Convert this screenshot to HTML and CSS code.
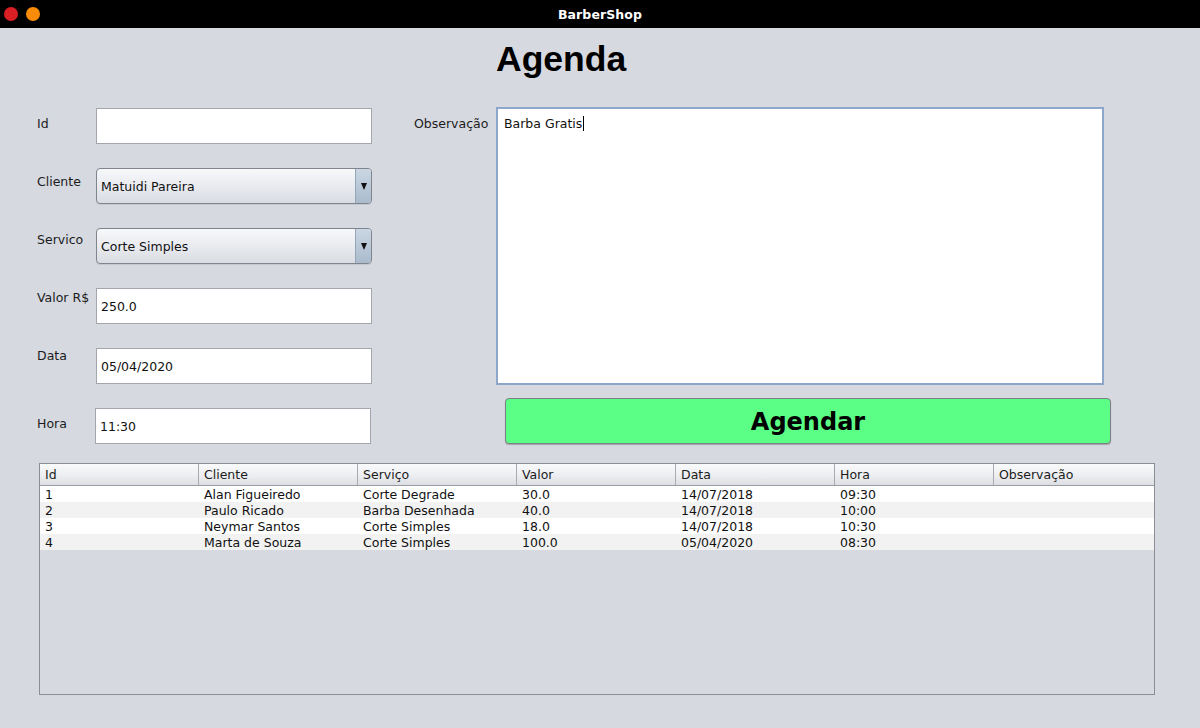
FILE: index.html
```html
<!DOCTYPE html>
<html lang="pt">
<head>
<meta charset="utf-8">
<title>BarberShop</title>
<link rel="stylesheet" href="styles.css">
</head>
<body>
<div class="window">
  <div class="titlebar">
    <div class="lights">
      <span class="light red"></span>
      <span class="light orange"></span>
    </div>
    <div class="wtitle">BarberShop</div>
  </div>
  <div class="content">
    <h1 class="heading">Agenda</h1>
    <div class="top">
      <div class="form">
        <div class="row">
          <label class="lbl off8">Id</label>
          <div class="field"></div>
        </div>
        <div class="row">
          <label class="lbl off5">Cliente</label>
          <div class="combo"><span class="combo-text">Matuidi Pareira</span><span class="combo-btn"><span class="tri"></span></span></div>
        </div>
        <div class="row">
          <label class="lbl off4">Servico</label>
          <div class="combo"><span class="combo-text">Corte Simples</span><span class="combo-btn"><span class="tri"></span></span></div>
        </div>
        <div class="row">
          <label class="lbl off2">Valor R$</label>
          <div class="field">250.0</div>
        </div>
        <div class="row">
          <label class="lbl off0">Data</label>
          <div class="field">05/04/2020</div>
        </div>
        <div class="row">
          <label class="lbl off8">Hora</label>
          <div class="field shift">11:30</div>
        </div>
      </div>
      <div class="right">
        <div class="obs-row">
          <label class="lbl obs-lbl">Observação</label>
          <div class="textarea">Barba Gratis<span class="caret"></span></div>
        </div>
        <div class="btn">Agendar</div>
      </div>
    </div>
    <div class="table">
      <div class="thead">
        <div class="th">Id</div>
        <div class="th">Cliente</div>
        <div class="th">Serviço</div>
        <div class="th">Valor</div>
        <div class="th">Data</div>
        <div class="th">Hora</div>
        <div class="th last">Observação</div>
      </div>
      <div class="tr">
        <div class="td">1</div><div class="td">Alan Figueiredo</div><div class="td">Corte Degrade</div><div class="td">30.0</div><div class="td">14/07/2018</div><div class="td">09:30</div><div class="td"></div>
      </div>
      <div class="tr alt">
        <div class="td">2</div><div class="td">Paulo Ricado</div><div class="td">Barba Desenhada</div><div class="td">40.0</div><div class="td">14/07/2018</div><div class="td">10:00</div><div class="td"></div>
      </div>
      <div class="tr">
        <div class="td">3</div><div class="td">Neymar Santos</div><div class="td">Corte Simples</div><div class="td">18.0</div><div class="td">14/07/2018</div><div class="td">10:30</div><div class="td"></div>
      </div>
      <div class="tr alt">
        <div class="td">4</div><div class="td">Marta de Souza</div><div class="td">Corte Simples</div><div class="td">100.0</div><div class="td">05/04/2020</div><div class="td">08:30</div><div class="td"></div>
      </div>
    </div>
  </div>
</div>
</body>
</html>
```

FILE: styles.css
```css
* { box-sizing: border-box; }

html, body {
  margin: 0;
  padding: 0;
}

body {
  width: 1200px;
  height: 728px;
  overflow: hidden;
  background: #d6d9e0;
  font-family: "DejaVu Sans", "Liberation Sans", sans-serif;
  font-size: 12.5px;
  color: #1c1c1c;
}

.window {
  width: 1200px;
  height: 728px;
  display: flex;
  flex-direction: column;
}

.titlebar {
  height: 28px;
  background: #000;
  display: flex;
  align-items: center;
  justify-content: center;
  position: relative;
}

.lights {
  position: absolute;
  left: 4px;
  top: 7px;
  display: flex;
  gap: 8px;
}

.light {
  width: 14px;
  height: 14px;
  border-radius: 50%;
  display: block;
}

.red { background: #d91e24; }
.orange { background: #fa8b08; }

.wtitle {
  color: #fff;
  font-weight: bold;
  font-size: 12.5px;
  letter-spacing: 0.1px;
}

.content {
  flex: 1;
  display: flex;
  flex-direction: column;
}

.heading {
  margin: 11px 0 0 496px;
  font-family: "Liberation Sans", Arial, sans-serif;
  font-weight: bold;
  font-size: 35.5px;
  line-height: 40px;
  height: 40px;
  color: #000;
}

.top {
  margin-top: 28px;
  display: flex;
  padding-left: 37px;
  gap: 42px;
}

.form {
  width: 335px;
  margin-top: 1px;
  display: flex;
  flex-direction: column;
  gap: 24px;
}

.row {
  display: flex;
  align-items: flex-start;
  height: 36px;
}

.lbl {
  width: 59px;
  line-height: 16px;
  white-space: nowrap;
  color: #1c1c1c;
}

.off8 { margin-top: 8px; }
.off5 { margin-top: 6px; }
.off4 { margin-top: 4px; }
.off2 { margin-top: 2px; }
.off0 { margin-top: 0; }

.field {
  width: 276px;
  height: 36px;
  background: #fff;
  border: 1px solid #a3a6ad;
  padding: 1px 0 0 4px;
  line-height: 34px;
  color: #111;
}

.field.shift { margin-left: -1px; }

.combo {
  width: 276px;
  height: 36px;
  border: 1px solid #80848d;
  border-radius: 4px;
  background: linear-gradient(#f7f8fa 0%, #e9ebef 50%, #d9dce2 100%);
  display: flex;
  overflow: hidden;
  box-shadow: 0 1px 0 rgba(0,0,0,0.08);
}

.combo-text {
  flex: 1;
  padding: 1px 0 0 4px;
  line-height: 34px;
  color: #111;
}

.combo-btn {
  width: 16px;
  border-left: 1px solid #95a6b8;
  background: linear-gradient(#cbd7e3, #a9bbcd);
  display: flex;
  align-items: center;
  justify-content: center;
}

.tri {
  width: 0;
  height: 0;
  border-left: 3.5px solid transparent;
  border-right: 3.5px solid transparent;
  border-top: 7px solid #111;
}

.right {
  display: flex;
  flex-direction: column;
}

.obs-row {
  display: flex;
  align-items: flex-start;
}

.obs-lbl {
  width: 82px;
  margin-top: 9px;
}

.textarea {
  width: 608px;
  height: 278px;
  background: #fff;
  border: 2px solid #8ca7cb;
  padding: 7px 6px;
  line-height: 16px;
  color: #111;
}

.caret {
  display: inline-block;
  width: 1px;
  height: 15px;
  background: #000;
  vertical-align: -3px;
  margin-left: 1px;
}

.btn {
  margin: 13px 0 0 91px;
  width: 606px;
  height: 46px;
  background: #5bff85;
  border: 1px solid #7d7f87;
  border-radius: 4px;
  box-shadow: 0 1px 1px rgba(0,0,0,0.25);
  display: flex;
  align-items: center;
  justify-content: center;
  padding-top: 1px;
  font-family: "DejaVu Sans", sans-serif;
  font-weight: bold;
  font-size: 24px;
  color: #000;
}

.table {
  margin: 19px 0 0 39px;
  width: 1116px;
  height: 232px;
  border: 1px solid #8b8e95;
  background: #d6d9e0;
}

.thead,
.tr {
  display: grid;
  grid-template-columns: repeat(6, 159px) 1fr;
}

.thead {
  height: 22px;
  background: linear-gradient(#fafafb 0%, #eceef1 55%, #dcdee3 100%);
  border-bottom: 1px solid #9a9da4;
}

.th {
  padding-left: 5px;
  line-height: 21px;
  border-right: 1px solid #a7aab1;
  color: #1c1c1c;
}

.th.last { border-right: none; }

.tr {
  height: 16px;
  background: #fff;
}

.tr.alt { background: #f2f2f2; }

.td {
  padding: 1px 0 0 5px;
  line-height: 15px;
  color: #111;
  white-space: nowrap;
}
```
